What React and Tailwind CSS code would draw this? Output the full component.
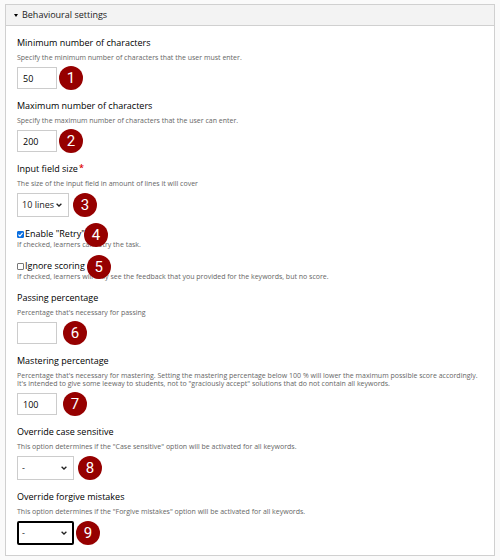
import { useState } from "react";

function Badge({ number, className = "" }) {
  return (
    <span
      className={`flex size-6 shrink-0 items-center justify-center rounded-full bg-[#960000] font-['Roboto',sans-serif] text-[15px] leading-4 text-white ${className}`}
    >
      {number}
    </span>
  );
}

function Field({ id, label, hint, required, badge, badgeClass, children }) {
  return (
    <div>
      <label htmlFor={id} className="flex text-[9px] leading-[14px] font-medium text-black">
        {label}
        {required && <span className="ml-px text-[9px] leading-[12px] font-semibold text-[#e00000]">*</span>}
      </label>
      <p className="mt-1 text-[7px] leading-[8px] text-[#666]">{hint}</p>
      <div className="mt-[5px] flex items-center">
        {children}
        <Badge number={badge} className={`-my-1 ${badgeClass}`} />
      </div>
    </div>
  );
}

function TextBox({ id, initial = "" }) {
  const [value, setValue] = useState(initial);
  return (
    <input
      id={id}
      type="text"
      value={value}
      onChange={(e) => setValue(e.target.value)}
      className="h-[22px] w-10 border border-[#ccc] bg-white px-[5px] text-[9px] font-medium text-black outline-none"
    />
  );
}

function SelectBox({ id, options, width, active }) {
  return (
    <div className={`relative ${width}`}>
      <select
        id={id}
        className={`block h-6 w-full appearance-none bg-white text-[9px] text-[#222] outline-none ${
          active ? "rounded-[2px] border-2 border-black px-[3px]" : "border border-[#ccc] px-1"
        }`}
      >
        {options.map((option) => (
          <option key={option}>{option}</option>
        ))}
      </select>
      <svg
        viewBox="0 0 6 4"
        className="pointer-events-none absolute top-[10px] right-[7px] h-1 w-1.5 fill-none stroke-[#222]"
      >
        <path d="M0.6 0.7 3 3 5.4 0.7" strokeWidth="1.3" />
      </svg>
    </div>
  );
}

function CheckField({ id, label, hint, badge, badgeClass, checked: initial }) {
  const [checked, setChecked] = useState(initial);
  return (
    <div>
      <div className="relative flex w-fit items-center gap-px">
        <span className="relative flex size-[7px]">
          <input
            id={id}
            type="checkbox"
            checked={checked}
            onChange={(e) => setChecked(e.target.checked)}
            className="size-[7px] appearance-none rounded-[1px] border border-[#777] bg-white checked:border-[#0b6fe0] checked:bg-[#0b6fe0]"
          />
          {checked && (
            <svg viewBox="0 0 6 6" className="pointer-events-none absolute inset-0 size-[7px] fill-none stroke-white">
              <path d="M1.2 3.1 2.5 4.4 4.8 1.6" />
            </svg>
          )}
        </span>
        <label htmlFor={id} className="text-[9px] leading-[14px] font-medium text-black">
          {label}
        </label>
        <Badge number={badge} className={`absolute -top-1 left-full ${badgeClass}`} />
      </div>
      <p className="text-[7px] leading-[8px] text-[#666]">{hint}</p>
    </div>
  );
}

export default function App() {
  const [open, setOpen] = useState(true);

  return (
    <main className="min-h-screen bg-[#fafafa] px-[5px] pt-1 pb-[3px] font-['Open_Sans',sans-serif]">
      <section className="border border-[#d0d0d0] bg-white">
        <button
          type="button"
          aria-expanded={open}
          onClick={() => setOpen(!open)}
          className="flex w-full items-center gap-1 border-b border-[#d0d0d0] bg-[#f3f3f3] px-2 text-[9px] leading-5 text-[#222]"
        >
          <svg viewBox="0 0 4 3" className="h-[3px] w-1 fill-black">
            <path d="M0 0h4L2 3z" />
          </svg>
          Behavioural settings
        </button>

        {open && (
          <div className="flex flex-col gap-[10px] px-[11px] pt-[10px] pb-[10px]">
            <Field
              id="min-chars"
              label="Minimum number of characters"
              hint="Specify the minimum number of characters that the user must enter."
              badge={1}
              badgeClass="ml-0.5"
            >
              <TextBox id="min-chars" initial="50" />
            </Field>
            <Field
              id="max-chars"
              label="Maximum number of characters"
              hint="Specify the maximum number of characters that the user can enter."
              badge={2}
              badgeClass="ml-0.5"
            >
              <TextBox id="max-chars" initial="200" />
            </Field>
            <Field
              id="field-size"
              label="Input field size"
              hint="The size of the input field in amount of lines it will cover"
              required
              badge={3}
              badgeClass="ml-1"
            >
              <SelectBox id="field-size" options={["10 lines", "1 line", "3 lines"]} width="w-[52px]" />
            </Field>

            <CheckField
              id="retry"
              label={'Enable "Retry"'}
              hint="If checked, learners can retry the task."
              badge={4}
              badgeClass="-ml-px"
              checked={true}
            />
            <CheckField
              id="ignore-scoring"
              label="Ignore scoring"
              hint="If checked, learners will only see the feedback that you provided for the keywords, but no score."
              badge={5}
              badgeClass="ml-0.5"
              checked={false}
            />

            <Field
              id="passing"
              label="Passing percentage"
              hint="Percentage that's necessary for passing"
              badge={6}
              badgeClass="ml-1.5"
            >
              <TextBox id="passing" />
            </Field>
            <Field
              id="mastering"
              label="Mastering percentage"
              hint={
                <>
                  Percentage that's necessary for mastering. Setting the mastering percentage below 100 % will lower the
                  maximum possible score accordingly.
                  <br />
                  It's intended to give some leeway to students, not to "graciously accept" solutions that do not contain
                  all keywords.
                </>
              }
              badge={7}
              badgeClass="ml-1.5"
            >
              <TextBox id="mastering" initial="100" />
            </Field>
            <Field
              id="case-sensitive"
              label="Override case sensitive"
              hint={'This option determines if the "Case sensitive" option will be activated for all keywords.'}
              badge={8}
              badgeClass="ml-1"
            >
              <SelectBox id="case-sensitive" options={["-", "On", "Off"]} width="w-[57px]" />
            </Field>
            <Field
              id="forgive-mistakes"
              label="Override forgive mistakes"
              hint={'This option determines if the "Forgive mistakes" option will be activated for all keywords.'}
              badge={9}
              badgeClass="ml-0.5"
            >
              <SelectBox id="forgive-mistakes" options={["-", "On", "Off"]} width="w-[57px]" active />
            </Field>
          </div>
        )}
      </section>
    </main>
  );
}
